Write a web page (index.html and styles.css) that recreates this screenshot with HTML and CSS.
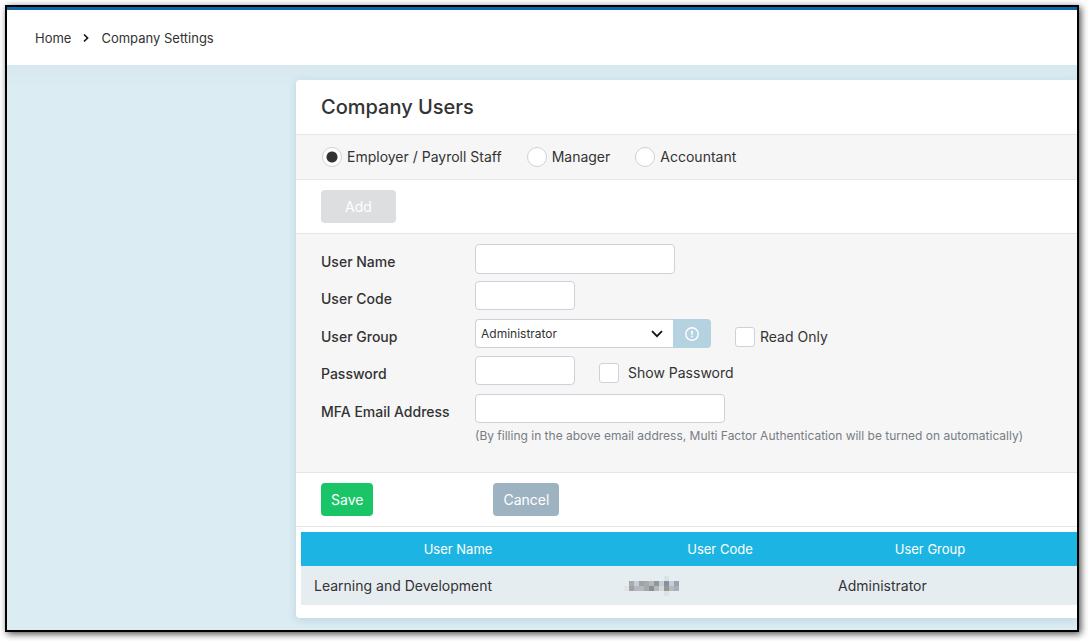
FILE: index.html
```html
<!DOCTYPE html>
<html lang="en">

<head>
    <meta charset="UTF-8">
    <meta name="viewport" content="width=device-width, initial-scale=1.0">
    <title>Company Settings</title>
    <link rel="stylesheet" href="styles.css">
</head>

<body>
    <div class="window">
        <nav class="breadcrumb">
            <a href="#">Home</a>
            <svg width="6" height="10" viewBox="0 0 6 10">
                <path d="M1 1.5L4.6 5L1 8.5" fill="none" stroke="#111" stroke-width="1.6" />
            </svg>
            <a href="#">Company Settings</a>
        </nav>

        <main class="content">
            <div class="card">
                <h1>Company Users</h1>

                <div class="section grey radios">
                    <label><input type="radio" name="userType" checked>Employer / Payroll Staff</label>
                    <label><input type="radio" name="userType">Manager</label>
                    <label><input type="radio" name="userType">Accountant</label>
                </div>

                <div class="section">
                    <button type="button" class="btn btnAdd" disabled>Add</button>
                </div>

                <form class="section grey form">
                    <label for="userName">User Name</label>
                    <div class="field">
                        <input type="text" id="userName" class="input medium">
                    </div>

                    <label for="userCode">User Code</label>
                    <div class="field tall">
                        <input type="text" id="userCode" class="input small">
                    </div>

                    <label for="userGroup">User Group</label>
                    <div class="field">
                        <div class="selectGroup">
                            <select id="userGroup" class="input">
                                <option>Administrator</option>
                            </select>
                            <svg class="arrow" width="12" height="8" viewBox="0 0 12 8">
                                <path d="M1 1.2L6 6.2L11 1.2" fill="none" stroke="#111" stroke-width="1.7" />
                            </svg>
                            <button type="button" class="btnInfo" aria-label="User group info">
                                <svg width="14" height="14" viewBox="0 0 14 14">
                                    <circle cx="7" cy="7" r="6.2" fill="none" stroke="#fff" stroke-width="1.4" />
                                    <path d="M7 3.8V7.8M7 8.8V10.3" fill="none" stroke="#fff" stroke-width="1.6" />
                                </svg>
                            </button>
                        </div>
                        <label class="check readOnly"><input type="checkbox">Read Only</label>
                    </div>

                    <label for="password">Password</label>
                    <div class="field tall">
                        <input type="password" id="password" class="input small">
                        <label class="check showPassword"><input type="checkbox">Show Password</label>
                    </div>

                    <label for="email">MFA Email Address</label>
                    <div class="field">
                        <input type="email" id="email" class="input large">
                    </div>

                    <p class="hint">(By filling in the above email address, Multi Factor Authentication will be turned on automatically)</p>
                </form>

                <div class="section actions">
                    <button type="button" class="btn btnSave">Save</button>
                    <button type="button" class="btn btnCancel">Cancel</button>
                </div>

                <div class="tableWrap">
                    <table>
                        <thead>
                            <tr>
                                <th class="colName">User Name</th>
                                <th class="colCode">User Code</th>
                                <th class="colGroup">User Group</th>
                                <th></th>
                            </tr>
                        </thead>
                        <tbody>
                            <tr>
                                <td>Learning and Development</td>
                                <td>
                                    <!-- masked code -->
                                    <svg class="mask" width="55" height="20" viewBox="0 0 11 4" shape-rendering="crispEdges">
                                        <path fill="#e2e4e4" d="M0 2h1v1h-1z" />
                                        <path fill="#dce2e6" d="M8 0h1v1h-1zM8 3h1v1h-1z" />
                                        <path fill="#a9a9a5" d="M1 1h1v1h-1zM4 1h1v2h-1z" />
                                        <path fill="#9fa2a8" d="M1 2h1v1h-1zM3 1h1v1h-1zM10 1h1v1h-1z" />
                                        <path fill="#c4ced6" d="M2 1h1v1h-1zM9 1h1v1h-1zM7 1h1v1h-1z" />
                                        <path fill="#b4b9be" d="M2 2h2v1h-2zM5 1h1v1h-1zM6 2h1v1h-1zM9 2h1v1h-1z" />
                                        <path fill="#a9aebc" d="M10 2h1v1h-1z" />
                                        <path fill="#87909a" d="M5 2h1v1h-1zM8 1h1v1h-1z" />
                                        <path fill="#959792" d="M6 1h1v1h-1zM8 2h1v1h-1z" />
                                        <path fill="#d4d7d7" d="M7 2h1v1h-1z" />
                                    </svg>
                                </td>
                                <td>Administrator</td>
                                <td></td>
                            </tr>
                        </tbody>
                    </table>
                </div>
            </div>
        </main>
    </div>
</body>

</html>
```

FILE: styles.css
```css
* {
    box-sizing: border-box;
}

body {
    margin: 0;
    padding: 5px 9px 9px 5px;
    background-color: #fff;
    color: #333;
    font-family: Inter, "Liberation Sans", sans-serif;
    font-size: 14px;
    line-height: 20px;
}

.window {
    display: flex;
    flex-direction: column;
    border: 2px solid #000;
    box-shadow: 2px 2px 7px rgba(0, 0, 0, 0.7);
    overflow: hidden;
}

.breadcrumb {
    display: flex;
    align-items: center;
    gap: 12px;
    height: 58px;
    padding: 0 28px;
    border-top: 3px solid #0f68a5;
    background-color: #fff;
    font-size: 13px;
}

.breadcrumb a {
    color: #333;
    text-decoration: none;
}

.content {
    padding: 15px 0 12px 289px;
    background: linear-gradient(#d7e8ef, #dbecf3 24px);
}

.card {
    background-color: #fff;
    border-radius: 4px 0 0 4px;
    box-shadow: 0 2px 8px rgba(40, 70, 90, 0.15);
    padding-bottom: 13px;
}

h1 {
    margin: 0;
    padding: 13px 25px;
    border-bottom: 1px solid #e6e6e6;
    font-size: 20px;
    font-weight: 500;
    line-height: 28px;
}

.section {
    padding: 10px 25px;
    border-bottom: 1px solid #e6e6e6;
}

.grey {
    background-color: #f6f6f6;
}

.radios {
    display: flex;
    gap: 25px;
    padding: 12px 26px;
}

.radios label {
    display: flex;
    align-items: center;
    gap: 5px;
}

input[type="radio"],
input[type="checkbox"] {
    appearance: none;
    width: 20px;
    height: 20px;
    margin: 0;
    border: 1px solid #cdd1da;
    background-color: #fff;
}

input[type="radio"] {
    border-radius: 50%;
}

input[type="radio"]:checked {
    background-image: radial-gradient(circle, #333 5px, #fff 6px);
}

input[type="checkbox"] {
    border-radius: 3px;
}

.btn {
    display: block;
    height: 33px;
    padding: 0 10px;
    border: none;
    border-radius: 4px;
    color: #fff;
    font-family: inherit;
    font-size: 14px;
}

.btnAdd {
    width: 75px;
    background-color: #dddee0;
}

.btnSave {
    background-color: #1ac568;
}

.btnCancel {
    background-color: #9eb3c1;
}

.actions {
    display: flex;
    gap: 120px;
}

.form {
    display: grid;
    grid-template-columns: 154px 1fr;
    row-gap: 8px;
    padding-bottom: 26px;
}

.form > label {
    height: 28px;
    padding-top: 8px;
    font-weight: 500;
}

.field {
    display: flex;
    align-items: flex-start;
    height: 29px;
}

.tall {
    height: 30px;
}

.input {
    height: 29px;
    padding: 0 5px;
    border: 1px solid #cdd1da;
    border-radius: 4px;
    background-color: #fff;
    color: #333;
    font-family: inherit;
    font-size: 12px;
}

.small {
    width: 100px;
}

.medium {
    width: 200px;
    height: 30px;
}

.large {
    width: 250px;
}

.selectGroup {
    display: flex;
    position: relative;
}

.selectGroup select {
    appearance: none;
    width: 198px;
    border-right: none;
    border-radius: 4px 0 0 4px;
}

.arrow {
    position: absolute;
    top: 11px;
    left: 176px;
    pointer-events: none;
}

.btnInfo {
    display: flex;
    align-items: center;
    justify-content: center;
    width: 38px;
    height: 29px;
    padding: 0;
    border: none;
    border-radius: 0 4px 4px 0;
    background-color: #b5d2e0;
}

.check {
    display: flex;
    align-items: center;
    padding-top: 8px;
}

.readOnly {
    gap: 5px;
    margin-left: 24px;
}

.showPassword {
    gap: 9px;
    margin-left: 24px;
    padding-top: 7px;
}

.hint {
    grid-column: 2;
    margin: -5px 0 0;
    color: #777d85;
    font-size: 12px;
    white-space: nowrap;
}

.tableWrap {
    padding: 5px 0 0 5px;
}

table {
    width: 100%;
    border-collapse: collapse;
    table-layout: fixed;
}

th {
    height: 34px;
    padding: 0 13px;
    background-color: #1cb5e3;
    color: #fff;
    font-size: 13px;
    font-weight: 400;
}

td {
    height: 39px;
    padding: 0 13px;
    background-color: #e6edf0;
}

.colName {
    width: 314px;
}

.colCode,
.colGroup {
    width: 210px;
}

.mask {
    display: block;
    margin-left: -4px;
}
```
